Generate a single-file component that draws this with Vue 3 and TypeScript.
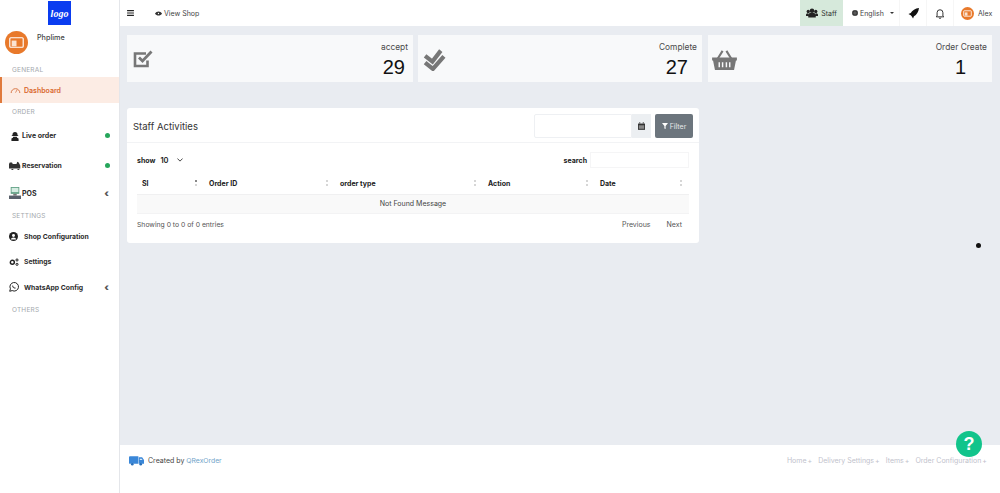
<script setup lang="ts">
interface Col { label: string; width: number }
const cols: Col[] = [
  { label: 'SI', width: 67 },
  { label: 'Order ID', width: 131 },
  { label: 'order type', width: 148 },
  { label: 'Action', width: 112 },
  { label: 'Date', width: 94 },
]
const footerLinks = ['Home', 'Delivery Settings', 'Items', 'Order Configuration']
</script>

<template>
  <div class="app">
    <aside class="side">
      <div class="logo-wrap">
        <div class="logo"><span>logo</span></div>
      </div>
      <div class="user">
        <div class="avatar">
          <svg viewBox="0 0 24 24" width="23" height="23">
            <circle cx="12" cy="12" r="12" fill="#e8792b" />
            <rect x="5" y="7" width="14" height="10" rx="1" fill="none" stroke="#fff" stroke-width="1.2" />
            <rect x="7" y="10" width="5" height="6" fill="#fbe3d2" />
          </svg>
        </div>
        <span class="uname">Phplime</span>
      </div>
      <div class="label">GENERAL</div>
      <a class="item active">
        <svg class="ic-dash" viewBox="0 0 16 12" width="11" height="8">
          <path d="M1.5 10.5A6.5 6.5 0 0 1 14.5 10.5" fill="none" stroke="#d97a4a" stroke-width="1.5" />
          <path d="M8 10L10.5 5.5" stroke="#d97a4a" stroke-width="1.2" />
        </svg>
        <span>Dashboard</span>
      </a>
      <div class="label">ORDER</div>
      <a class="item tight h29">
        <svg viewBox="0 0 14 14" width="10" height="10">
          <path d="M3.500 5a3.500 3.500 0 0 1 7 0v1h1v1h-9V6h1zM4.500 8h5l.5 1.500 2 1V14H2v-3.500l2-1z" fill="#222" />
        </svg>
        <span>Live order</span>
        <i class="dot"></i>
      </a>
      <a class="item tight h30 res">
        <svg viewBox="0 0 16 12" width="12" height="9">
          <path d="M1 2h3l1 2h5l1-3 2 1 2 4v4H0V4zM3 10.500a1.500 1.500 0 0 0 3 0zM11 10.500a1.500 1.500 0 0 0 3 0z" fill="#333" />
        </svg>
        <span>Reservation</span>
        <i class="dot"></i>
      </a>
      <a class="item tight pos">
        <svg viewBox="0 0 14 14" width="12" height="12">
          <rect x="2" y="0" width="10" height="8" fill="#5f9f83" />
          <rect x="3" y="1" width="8" height="5" fill="#d6ece2" />
          <rect x="5" y="8" width="4" height="2" fill="#777" />
          <rect x="0" y="10" width="14" height="4" fill="#59606b" />
        </svg>
        <span>POS</span>
        <b class="chev">‹</b>
      </a>
      <div class="label low">SETTINGS</div>
      <a class="item wide">
        <svg viewBox="0 0 14 14" width="9" height="9">
          <circle cx="7" cy="7" r="7" fill="#222" />
          <circle cx="7" cy="5.500" r="2.300" fill="#fff" />
          <path d="M3 11.500a4 3 0 0 1 8 0z" fill="#fff" />
        </svg>
        <span>Shop Configuration</span>
      </a>
      <a class="item wide g5">
        <svg viewBox="0 0 14 12" width="10" height="8">
          <circle cx="4.500" cy="6.500" r="3" fill="none" stroke="#222" stroke-width="2.200" />
          <circle cx="11.500" cy="3" r="1.600" fill="none" stroke="#222" stroke-width="1.500" />
          <circle cx="11.500" cy="9.500" r="1.600" fill="none" stroke="#222" stroke-width="1.500" />
        </svg>
        <span>Settings</span>
      </a>
      <a class="item wide g5 h26">
        <svg viewBox="0 0 14 14" width="10" height="10">
          <path d="M1 13l1-3.500A6 6 0 1 1 4.500 12z" fill="none" stroke="#222" stroke-width="1.400" />
          <path d="M5 4.500c-1 1 0 3 1.500 4s2.500 1 3-.2L8.200 7.500l-.8.600-1.500-1.500.5-.8z" fill="#222" />
        </svg>
        <span>WhatsApp Config</span>
        <b class="chev">‹</b>
      </a>
      <div class="label low">OTHERS</div>
    </aside>

    <div class="main">
      <header class="top">
        <svg class="burger" viewBox="0 0 8 7" width="7" height="6">
          <path d="M0 .7h8M0 3.500h8M0 6.300h8" stroke="#222" stroke-width="1.300" />
        </svg>
        <a class="view">
          <svg viewBox="0 0 14 9" width="7" height="5">
            <path d="M0 4.500C3 -1 11 -1 14 4.500C11 10 3 10 0 4.500z" fill="#333" />
            <circle cx="7" cy="4.500" r="1.300" fill="#fff" />
          </svg>
          View Shop
        </a>
        <div class="spacer"></div>
        <div class="staff">
          <svg viewBox="0 0 16 12" width="12" height="10">
            <circle cx="8" cy="3" r="3" fill="#222" />
            <circle cx="3" cy="4" r="2.200" fill="#222" />
            <circle cx="13" cy="4" r="2.200" fill="#222" />
            <path d="M3 12V8.500a5 3 0 0 1 10 0V12zM0 10V8a3 2 0 0 1 3-1.500V10zM16 10V8a3 2 0 0 0-3-1.500V10z" fill="#222" />
          </svg>
          Staff
        </div>
        <div class="lang">
          <svg viewBox="0 0 10 10" width="6" height="6"><circle cx="5" cy="5" r="5" fill="#333" /><path d="M0 5h10M5 0v10" stroke="#aaa" stroke-width=".6" /></svg>
          English
          <i class="caret"></i>
        </div>
        <div class="tool">
          <svg viewBox="0 0 12 12" width="11" height="11">
            <path d="M12 0C8 .5 4.500 2.500 3 5.500L.5 6.500 3 8l1 1 1.500 2.500 1-2.500C9.500 7.500 11.500 4 12 0z" fill="#111" />
          </svg>
        </div>
        <div class="tool">
          <svg viewBox="0 0 12 13" width="10" height="11">
            <path d="M2.500 9.500V5.500a3.500 3.500 0 0 1 7 0v4l1 1h-9zM5 11.500a1 1 0 0 0 2 0" fill="none" stroke="#222" stroke-width="1.100" />
          </svg>
        </div>
        <div class="me">
          <svg viewBox="0 0 24 24" width="13" height="13">
            <circle cx="12" cy="12" r="12" fill="#e8792b" />
            <rect x="5" y="7" width="14" height="10" rx="1" fill="none" stroke="#fff" stroke-width="1.500" />
            <rect x="7" y="10" width="5" height="6" fill="#fbe3d2" />
          </svg>
          <span>Alex</span>
        </div>
      </header>

      <main class="content">
        <section class="cards">
          <div class="card c1">
            <svg class="big" viewBox="0 0 20 20" width="20" height="20">
              <path d="M14.500 11.500V17H2V4.500h11" fill="none" stroke="#777" stroke-width="2.600" />
              <path d="M6 8.500l3.500 3.500L18.500 2.500" fill="none" stroke="#777" stroke-width="2.800" />
            </svg>
            <div class="stat"><span class="name">accept</span><strong>29</strong></div>
          </div>
          <div class="card c2">
            <svg class="big b2" viewBox="0 0 22 22" width="23" height="23">
              <path d="M2 7.500l7 5.500L17 2.500M2 14l7.500 6L20 8" fill="none" stroke="#777" stroke-width="4" />
            </svg>
            <div class="stat"><span class="name">Complete</span><strong>27</strong></div>
          </div>
          <div class="card c3">
            <svg class="big b3" viewBox="0 0 26 22" width="25" height="21">
              <path d="M6 10l5-8M20 10L15 2" stroke="#777" stroke-width="2.200" fill="none" />
              <path d="M0 9h26v3h-1l-2 10H3L1 12H0z" fill="#777" />
              <path d="M7.500 14v5M11 14v5M15 14v5M18.500 14v5" stroke="#f8f9fa" stroke-width="1.500" />
            </svg>
            <div class="stat"><span class="name">Order Create</span><strong>1</strong></div>
          </div>
        </section>

        <section class="panel">
          <div class="panel-head">
            <h2>Staff Activities</h2>
            <div class="filters">
              <div class="date"></div>
              <div class="addon">
                <svg viewBox="0 0 10 11" width="7" height="8">
                  <path d="M0 2h10v9H0z" fill="#333" />
                  <path d="M1.200 4.500h7.600v5H1.200z" fill="#888" />
                  <path d="M2.500 0v2M7.500 0v2" stroke="#333" stroke-width="1.200" />
                </svg>
              </div>
              <button class="btn" type="button">
                <svg viewBox="0 0 10 10" width="6" height="6"><path d="M0 0h10L6 5v5L4 9V5z" fill="#fff" /></svg>
                Filter
              </button>
            </div>
          </div>
          <div class="panel-body">
            <div class="tools">
              <div class="show">
                <b>show</b>
                <span class="sel">10 <svg viewBox="0 0 8 5" width="6" height="4"><path d="M.5.500L4 4 7.500.500" fill="none" stroke="#333" stroke-width="1.200" /></svg></span>
              </div>
              <div class="search"><b>search</b><div class="box"></div></div>
            </div>
            <table>
              <colgroup>
                <col v-for="c in cols" :key="c.label" :style="{ width: c.width + 'px' }" />
              </colgroup>
              <thead>
                <tr>
                  <th v-for="(c, i) in cols" :key="c.label">
                    {{ c.label }}
                    <span class="sort" :class="{ on: i === 0 }"><i></i><i></i></span>
                  </th>
                </tr>
              </thead>
              <tbody>
                <tr><td :colspan="cols.length">Not Found Message</td></tr>
              </tbody>
            </table>
            <div class="pager">
              <span>Showing 0 to 0 of 0 entries</span>
              <div class="pages"><span>Previous</span><span>Next</span></div>
            </div>
          </div>
        </section>
        <i class="marker"></i>
      </main>

      <footer class="foot">
        <div class="credit">
          <svg viewBox="0 0 16 10" width="15" height="10">
            <path d="M0 1a1 1 0 0 1 1-1h9v8H1a1 1 0 0 1-1-1zM10.500 1H14l2 3v4h-5.500z" fill="#3a87d8" />
            <circle cx="3.500" cy="8.500" r="1.400" fill="#2a6fb8" />
            <circle cx="12.500" cy="8.500" r="1.400" fill="#2a6fb8" />
            <path d="M11.500 2.500h2l1 1.500h-3z" fill="#d7e8f8" />
          </svg>
          Created by <a>QRexOrder</a>
        </div>
        <nav class="links">
          <a v-for="l in footerLinks" :key="l">{{ l }}<em>+</em></a>
        </nav>
      </footer>
      <button class="help" type="button">?</button>
    </div>
  </div>
</template>

<style>
html, body { margin: 0; padding: 0; background: #fff; }
</style>

<style scoped>
.app {
  display: grid;
  grid-template-columns: 120px 1fr;
  width: 1000px;
  height: 493px;
  overflow: hidden;
  font-family: Inter, "Liberation Sans", sans-serif;
  color: #333;
}
.side {
  background: #fff;
  border-right: 1px solid #e4e6ea;
  box-sizing: border-box;
  font-size: 7px;
}
.logo-wrap { height: 26px; display: flex; justify-content: center; padding-top: 1px; box-sizing: border-box; }
.logo { width: 23px; height: 24px; background: #0a3cf0; display: flex; align-items: center; justify-content: center; }
.logo span { color: #fff; font: italic 700 10px "Liberation Serif", serif; }
.user { height: 37px; display: flex; padding: 5px 0 0 5px; box-sizing: border-box; }
.uname { margin: 2px 0 0 9px; font-weight: 500; font-size: 7.2px; color: #444; }
.label { height: 18px; line-height: 18px; padding-left: 12px; font-size: 6.5px; letter-spacing: .2px; color: #a4a8ad; }
.label.low { line-height: 20px; }
.user + .label { height: 14px; line-height: 14px; }
.item { display: flex; align-items: center; height: 25px; padding: 0 10px 0 9px; font-weight: 700; font-size: 6.8px; color: #2c2c2c; }
.item.active { height: 26px; background: #fcece4; border-left: 2px solid #e07a3c; padding-left: 8px; gap: 3px; color: #d9682d; font-weight: 600; font-size: 7px; }
.tight { gap: 2px; padding-left: 10px; font-size: 7px; }
.tight svg { flex: none; }
.res { padding-left: 9px; gap: 1px; font-size: 6.800px; }
.wide { gap: 6px; }
.g5 { gap: 5px; }
.h29 { height: 29px; }
.h30 { height: 30px; }
.h26 { height: 26px; }
.pos { height: 26px; padding-left: 9px; gap: 1px; }
.dot { margin-left: auto; margin-right: -1px; width: 5px; height: 5px; border-radius: 50%; background: #26a65b; }
.chev { margin-left: auto; font-size: 10px; line-height: 1; color: #555; }

.main { position: relative; display: flex; flex-direction: column; background: #e9ecf1; min-width: 0; }
.top { height: 26px; background: #fff; display: flex; align-items: center; flex: none; font-size: 7px; color: #444; }
.burger { margin-left: 7px; }
.view { margin-left: 21px; display: flex; align-items: center; gap: 2px; font-size: 7px; }
.spacer { flex: 1; }
.staff { width: 43px; height: 26px; background: #d6e9db; display: flex; align-items: center; justify-content: center; gap: 3px; color: #333; }
.lang { width: 56px; display: flex; align-items: center; gap: 2px; padding-left: 9px; box-sizing: border-box; }
.caret { margin-left: 4px; border: 2.500px solid transparent; border-top-color: #333; border-bottom: 0; }
.tool { width: 27px; height: 26px; display: flex; align-items: center; justify-content: center; border-left: 1px solid #f6f6f6; box-sizing: border-box; }
.me { width: 47px; height: 26px; display: flex; align-items: center; padding-left: 7px; gap: 4px; box-sizing: border-box; border-left: 1px solid #f6f6f6; }
.me span { font-size: 7px; }

.content { flex: 1; position: relative; padding: 9px 8px 0 7px; box-sizing: border-box; min-height: 0; }
.cards { display: flex; }
.card { width: 286px; height: 47px; background: #f8f9fa; display: flex; justify-content: space-between; padding: 6px 5px 0 6px; box-sizing: border-box; }
.c2 { margin-left: 5px; width: 284px; }
.c3 { margin-left: 6px; width: 284px; }
.big { margin-top: 8px; flex: none; }
.b2 { margin-top: 7px; margin-left: -1px; }
.b3 { margin-left: -2px; }
.stat { display: flex; flex-direction: column; align-items: flex-end; }
.name { font-size: 8.400px; line-height: 12px; color: #4a4a4a; }
.stat strong { font: 400 20px/22px "Liberation Sans", sans-serif; color: #111; margin-top: 3px; }
.c1 .stat strong { margin-right: 3px; }
.c2 .stat strong { margin-right: 9px; }
.c3 .stat strong { margin-right: 21px; }

.panel { width: 572px; height: 135px; margin-top: 26px; background: #fff; border-radius: 3px; }
.panel-head { height: 35px; display: flex; align-items: center; justify-content: space-between; padding: 2px 6px 0; border-bottom: 1px solid #f2f3f5; box-sizing: border-box; }
h2 { margin: 0; font: 400 9.500px Inter, "Liberation Sans", sans-serif; color: #333; }
.filters { display: flex; align-items: center; }
.date { width: 98px; height: 24px; border: 1px solid #eef0f3; box-sizing: border-box; border-radius: 2px 0 0 2px; }
.addon { width: 19px; height: 24px; background: #eceff2; display: flex; align-items: center; justify-content: center; }
.btn { margin-left: 4px; width: 38px; height: 24px; border: 0; padding: 0; border-radius: 2px; background: #6c757d; color: #e6e8ea; font: 7px Inter, "Liberation Sans", sans-serif; display: flex; align-items: center; justify-content: center; gap: 2px; }
.panel-body { padding: 0 10px; }
.tools { display: flex; justify-content: space-between; align-items: center; height: 32px; padding-top: 2px; box-sizing: border-box; font-size: 7px; }
.tools b { font-weight: 700; color: #222; }
.show, .search { display: flex; align-items: center; }
.sel { margin-left: 5px; font-weight: 600; color: #222; display: flex; align-items: center; gap: 8px; font-size: 7.500px; }
.box { margin-left: 3px; width: 99px; height: 16px; border: 1px solid #f5f5f6; box-sizing: border-box; }
table { width: 552px; border-collapse: collapse; table-layout: fixed; font-size: 7px; }
th { height: 19px; padding: 0 0 1px 5px; text-align: left; position: relative; font-weight: 700; color: #222; box-sizing: border-box; }
thead tr { border-bottom: 1px solid #f0f0f1; }
td { height: 19px; padding: 0; text-align: center; background: #f9f9f9; color: #444; font-size: 7px; border-bottom: 1px solid #f3f3f4; box-sizing: border-box; }
.sort { position: absolute; right: 7px; top: 5px; display: flex; flex-direction: column; gap: 2px; }
.sort i { width: 2px; height: 2px; background: #d6d6d6; }
.sort.on i:first-child { background: #888; }
.pager { display: flex; justify-content: space-between; align-items: center; height: 22px; font-size: 6.800px; color: #555; }
.pages { display: flex; gap: 16px; padding-right: 7px; font-size: 7px; }

.marker { position: absolute; left: 856px; top: 217px; width: 5px; height: 5px; border-radius: 50%; background: #111; }

.foot { height: 48px; flex: none; background: #fff; display: flex; justify-content: space-between; padding: 0 13px 0 9px; box-sizing: border-box; font-size: 7px; }
.credit { display: flex; align-items: center; height: 31px; gap: 4px; color: #444; }
.credit a { color: #6fa3c9; margin-left: -2px; font-size: 6.800px; }
.links { display: flex; gap: 6px; height: 31px; align-items: center; color: #bfc2cc; }
.links em { font-style: normal; margin-left: 1px; }
.help { position: absolute; left: 836px; top: 431px; width: 26px; height: 26px; border-radius: 50%; border: 0; padding: 0; background: #12c48b; color: #fff; font: 700 18px "Liberation Sans", sans-serif; }
</style>
